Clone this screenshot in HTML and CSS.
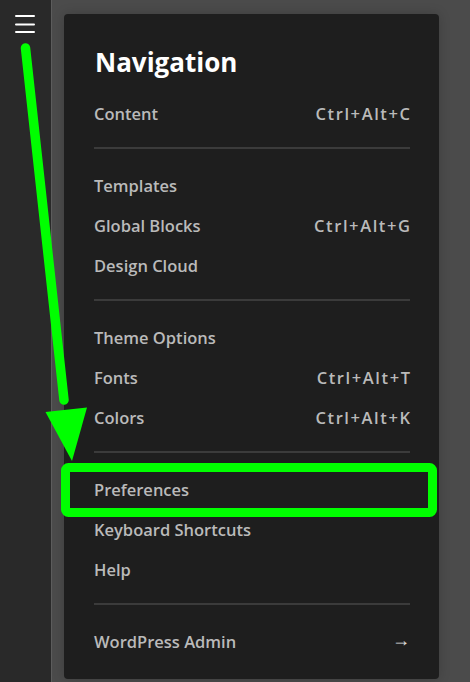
FILE: index.html
```html
<!DOCTYPE html>
<html lang="en">
<head>
<meta charset="utf-8">
<title>Navigation</title>
<link rel="stylesheet" href="styles.css">
</head>
<body>
<div class="app">
  <aside class="sidebar">
    <button class="menu-btn" aria-label="Menu">
      <svg width="22" height="20" viewBox="0 0 22 20">
        <g stroke="#ffffff" stroke-width="2" stroke-linecap="round">
          <line x1="2" y1="3" x2="20" y2="3"/>
          <line x1="2" y1="11.5" x2="20" y2="11.5"/>
          <line x1="2" y1="19" x2="20" y2="19"/>
        </g>
      </svg>
    </button>
  </aside>
  <main class="main">
    <nav class="panel">
      <h1 class="title">Navigation</h1>
      <ul class="group">
        <li class="row"><span>Content</span><span class="key">Ctrl+Alt+C</span></li>
      </ul>
      <hr class="divider">
      <ul class="group">
        <li class="row"><span>Templates</span></li>
        <li class="row"><span>Global Blocks</span><span class="key">Ctrl+Alt+G</span></li>
        <li class="row"><span>Design Cloud</span></li>
      </ul>
      <hr class="divider">
      <ul class="group">
        <li class="row"><span>Theme Options</span></li>
        <li class="row"><span>Fonts</span><span class="key">Ctrl+Alt+T</span></li>
        <li class="row"><span>Colors</span><span class="key">Ctrl+Alt+K</span></li>
      </ul>
      <hr class="divider">
      <ul class="group">
        <li class="row"><span>Preferences</span></li>
        <li class="row"><span>Keyboard Shortcuts</span></li>
        <li class="row"><span>Help</span></li>
      </ul>
      <hr class="divider">
      <ul class="group">
        <li class="row"><span>WordPress Admin</span><span class="arrow">→</span></li>
      </ul>
    </nav>
  </main>
</div>
<svg class="annotation" width="470" height="682" viewBox="0 0 470 682">
  <line x1="25.5" y1="48" x2="64" y2="400" stroke="#00ff00" stroke-width="9.5" stroke-linecap="round"/>
  <polygon points="45.5,412 87,407.5 72,461" fill="#00ff00"/>
  <rect x="65.5" y="467.5" width="367" height="45" rx="3" fill="none" stroke="#00ff00" stroke-width="9"/>
</svg>
</body>
</html>
```
FILE: styles.css
```css
* { box-sizing: border-box; }
html, body {
  margin: 0;
  padding: 0;
  width: 470px;
  height: 682px;
  overflow: hidden;
  background: #4b4b4b;
  font-family: "Open Sans", "Noto Sans", sans-serif;
}
.app {
  display: flex;
  height: 682px;
}
.sidebar {
  width: 52px;
  flex: none;
  background: #292929;
  border-right: 1px solid #5c5c5c;
  display: flex;
  flex-direction: column;
  align-items: flex-start;
}
.menu-btn {
  margin: 13px 0 0 14px;
  padding: 0;
  border: 0;
  background: none;
  line-height: 0;
}
.main {
  flex: 1;
  padding: 14px 31px 0 12px;
}
.panel {
  width: 375px;
  background: #1e1e1e;
  border-radius: 4px;
  padding: 30px 29px 18px 30px;
  box-shadow: 0 0 12px rgba(0,0,0,0.18);
}
.title {
  margin: 0 0 13px 1px;
  height: 36px;
  line-height: 36px;
  font-size: 26px;
  font-weight: 700;
  color: #ffffff;
  letter-spacing: 0;
}
.group {
  list-style: none;
  margin: 0;
  padding: 0;
}
.row {
  height: 40px;
  display: flex;
  align-items: center;
  justify-content: space-between;
  font-size: 16.5px;
  font-weight: 600;
  color: #bababa;
  letter-spacing: 0;
}
.key {
  letter-spacing: 1.6px;
  margin-right: -1.6px;
}
.arrow {
  color: #e0e0e0;
  font-size: 18px;
  font-weight: 400;
  transform: translateY(-2px);
}
.divider {
  border: 0;
  height: 2px;
  background: #3b3b3b;
  margin: 14px 0 16px;
}
.annotation {
  position: absolute;
  left: 0;
  top: 0;
  pointer-events: none;
}
```
